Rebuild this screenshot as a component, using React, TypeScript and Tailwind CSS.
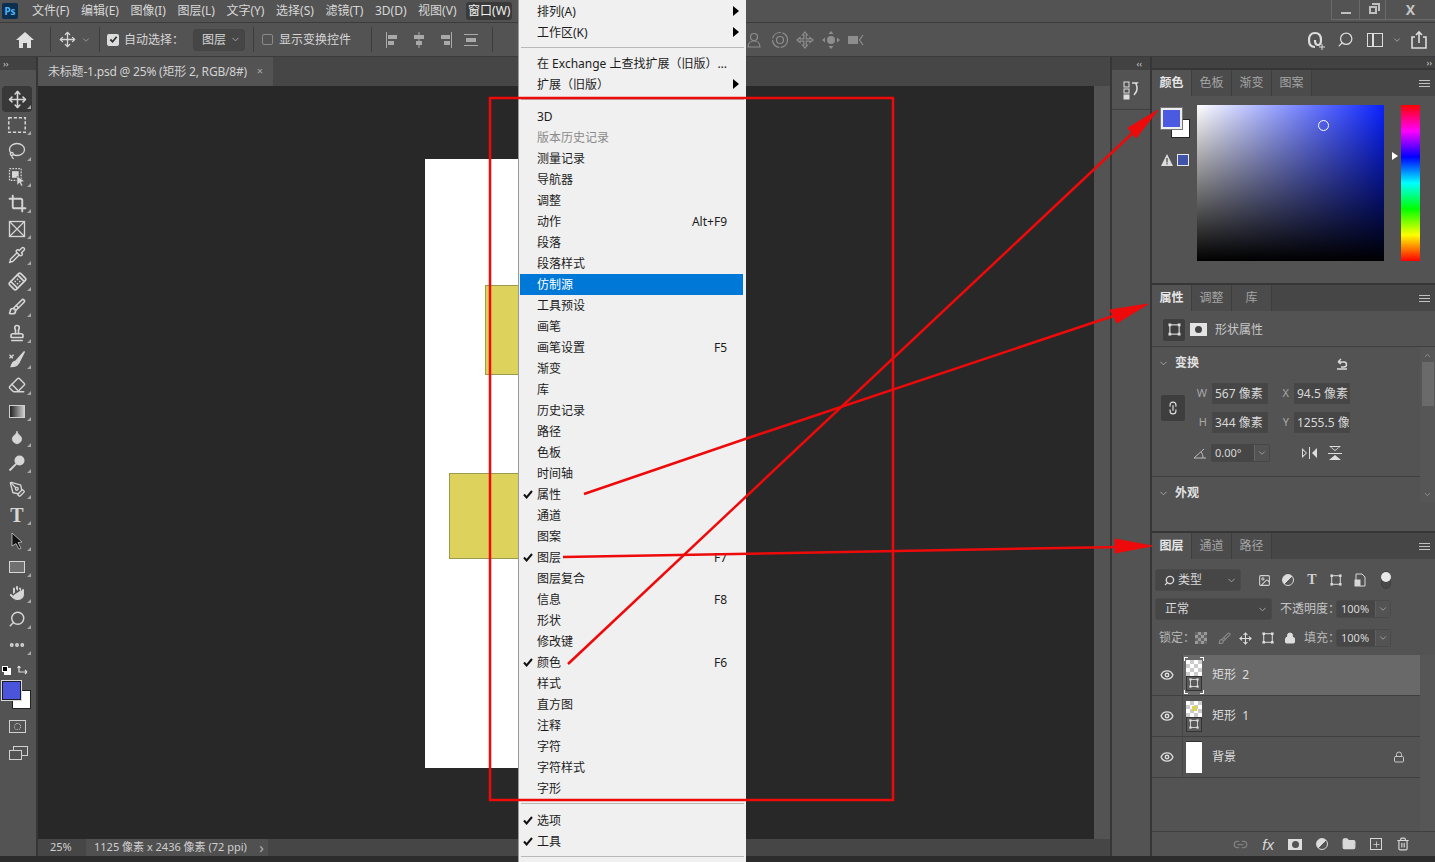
import type { ReactNode } from 'react';
import {
  Bandage,
  Brush,
  ChevronDown,
  Crop,
  Droplet,
  Ellipsis,
  Eraser,
  Eye,
  FolderClosed,
  Hand,
  Image as ImageIcon,
  Lasso,
  Link2,
  Lock,
  Move,
  PenTool,
  Pipette,
  Plus,
  Search,
  Stamp,
  Trash2,
} from 'lucide-react';

const MENUS = ['文件(F)', '编辑(E)', '图像(I)', '图层(L)', '文字(Y)', '选择(S)', '滤镜(T)', '3D(D)', '视图(V)'];

const WINDOW_ITEMS: { label: string; key?: string; checked?: boolean; disabled?: boolean; active?: boolean }[] = [
  { label: '3D' },
  { label: '版本历史记录', disabled: true },
  { label: '测量记录' },
  { label: '导航器' },
  { label: '调整' },
  { label: '动作', key: 'Alt+F9' },
  { label: '段落' },
  { label: '段落样式' },
  { label: '仿制源', active: true },
  { label: '工具预设' },
  { label: '画笔' },
  { label: '画笔设置', key: 'F5' },
  { label: '渐变' },
  { label: '库' },
  { label: '历史记录' },
  { label: '路径' },
  { label: '色板' },
  { label: '时间轴' },
  { label: '属性', checked: true },
  { label: '通道' },
  { label: '图案' },
  { label: '图层', key: 'F7', checked: true },
  { label: '图层复合' },
  { label: '信息', key: 'F8' },
  { label: '形状' },
  { label: '修改键' },
  { label: '颜色', key: 'F6', checked: true },
  { label: '样式' },
  { label: '直方图' },
  { label: '注释' },
  { label: '字符' },
  { label: '字符样式' },
  { label: '字形' },
];

const Glyph = ({ children, size = 22 }: { children: ReactNode; size?: number }) => (
  <svg width={size} height={size} viewBox="0 0 24 24" fill="none" stroke="currentColor" strokeWidth="1.7">
    {children}
  </svg>
);

// bounding box with little corner handles, used all over the panels
const FrameIcon = ({ size = 13, color = '#dddddd' }: { size?: number; color?: string }) => (
  <svg width={size} height={size} viewBox="0 0 14 14" fill="none" stroke={color} strokeWidth="1.2">
    <rect x="2" y="2" width="10" height="10" />
    <rect x="0.5" y="0.5" width="3" height="3" fill={color} stroke="none" />
    <rect x="10.5" y="0.5" width="3" height="3" fill={color} stroke="none" />
    <rect x="0.5" y="10.5" width="3" height="3" fill={color} stroke="none" />
    <rect x="10.5" y="10.5" width="3" height="3" fill={color} stroke="none" />
  </svg>
);

const ToolCell = ({ children, selected }: { children: ReactNode; selected?: boolean }) => (
  <div className={`relative flex h-[26px] w-[30px] items-center justify-center ml-[2px] rounded-sm text-[#d6d6d6] ${selected ? 'bg-[#383838]' : ''}`}>
    {children}
    <span className="absolute bottom-[3px] right-[1px] h-0 w-0 border-l-[4px] border-b-[4px] border-l-transparent border-b-[#a8a8a8]" />
  </div>
);

const LeftTools = () => (
  <div className="flex w-[36px] shrink-0 flex-col bg-[#535353]">
    <div className="flex h-[13px] items-center bg-[#424242] pl-[3px] text-[9px] leading-none text-[#d0d0d0]">››</div>
    <div className="h-[16px]" />
    <ToolCell selected><Move size={19} strokeWidth={2} /></ToolCell>
    <ToolCell><Glyph><rect x="3" y="4" width="18" height="16" strokeDasharray="3.5 2" /></Glyph></ToolCell>
    <ToolCell><Lasso size={18} strokeWidth={1.7} /></ToolCell>
    <ToolCell>
      <Glyph size={20}>
        <rect x="3" y="2" width="14" height="14" strokeDasharray="2 1.5" strokeWidth="1.5" />
        <rect x="6" y="5" width="8" height="8" fill="currentColor" stroke="none" />
        <path d="M12 11l9 6-4 1 2 4-2 1-2-4-3 3z" fill="currentColor" stroke="#535353" strokeWidth="0.6" />
      </Glyph>
    </ToolCell>
    <ToolCell><Crop size={19} strokeWidth={2.4} /></ToolCell>
    <ToolCell>
      <Glyph size={20}>
        <rect x="3" y="3" width="18" height="18" strokeWidth="1.6" />
        <path d="M3 3l18 18M21 3L3 21" strokeWidth="1.4" />
      </Glyph>
    </ToolCell>
    <ToolCell><Pipette size={18} strokeWidth={1.9} /></ToolCell>
    <ToolCell><Bandage size={19} strokeWidth={2.2} className="-rotate-45" /></ToolCell>
    <ToolCell><Brush size={18} strokeWidth={2.2} /></ToolCell>
    <ToolCell><Stamp size={18} strokeWidth={2.2} /></ToolCell>
    <ToolCell>
      <Glyph size={20}>
        <path d="M21 3L11 14l3 3z" fill="currentColor" />
        <path d="M10 15c-3 0-4 3-5 6 3 0 7-1 8-3z" fill="currentColor" />
        <path d="M3 11l5-4M3 7l4 4" strokeWidth="1.6" />
      </Glyph>
    </ToolCell>
    <ToolCell><Eraser size={18} strokeWidth={1.9} /></ToolCell>
    <ToolCell><div className="h-[13px] w-[16px] border border-[#d0d0d0] bg-[linear-gradient(to_right,#222222,#cccccc)]" /></ToolCell>
    <ToolCell><Droplet size={16} fill="currentColor" strokeWidth={1} /></ToolCell>
    <ToolCell>
      <Glyph size={20}>
        <circle cx="15" cy="9" r="6" fill="currentColor" stroke="none" />
        <path d="M11 13l-8 8" strokeWidth="2.4" />
      </Glyph>
    </ToolCell>
    <ToolCell><PenTool size={17} strokeWidth={1.9} /></ToolCell>
    <ToolCell><span className="font-['Liberation_Serif',serif] text-[20px] font-bold leading-none">T</span></ToolCell>
    <ToolCell>
      <svg width="16" height="18" viewBox="0 0 16 18"><path d="M3 1l10 9-4 .6 3 5.6-2 1-3-5.6L3 14z" fill="#111111" stroke="#dddddd" strokeWidth="0.7" /></svg>
    </ToolCell>
    <ToolCell><div className="h-[12px] w-[16px] border border-[#d6d6d6] bg-[#707070]" /></ToolCell>
    <ToolCell><Hand size={18} fill="currentColor" strokeWidth={1.4} stroke="#535353" /></ToolCell>
    <ToolCell><Search size={18} strokeWidth={1.9} className="-scale-x-100" /></ToolCell>
    <ToolCell><Ellipsis size={18} strokeWidth={3.2} /></ToolCell>
    <div className="ml-[2px] mt-[7px] flex h-[12px] w-[30px] items-center justify-between pr-[3px]">
      <div className="relative h-[10px] w-[10px]">
        <span className="absolute left-[2px] top-[2px] h-[7px] w-[7px] bg-white" />
        <span className="absolute left-0 top-0 h-[6px] w-[6px] border border-white bg-black" />
      </div>
      <svg width="12" height="12" viewBox="0 0 12 12" fill="none" stroke="#d8d8d8" strokeWidth="1.2"><path d="M2 1v6h8M10 7L8 5M10 7L8 9M2 1L.5 3M2 1l1.5 2" /></svg>
    </div>
    <div className="relative ml-[2px] mt-[3px] h-[30px] w-[30px]">
      <span className="absolute left-[10px] top-[10px] h-[19px] w-[19px] border border-[#222222] bg-white" />
      <span className="absolute left-0 top-[1px] h-[19px] w-[19px] border border-[#1d1d2a] bg-[#4b55dc] outline outline-[1px] outline-[#d8d8d8]" />
    </div>
    <div className="ml-[2px] mt-[3px] flex h-[26px] w-[30px] items-center justify-center">
      <div className="flex h-[13px] w-[17px] items-center justify-center border border-[#d0d0d0]">
        <span className="h-[7px] w-[7px] rounded-full border border-dotted border-[#d0d0d0]" />
      </div>
    </div>
    <div className="relative ml-[2px] mt-[2px] h-[26px] w-[30px]">
      <span className="absolute left-[11px] top-[5px] h-[10px] w-[15px] border border-[#d0d0d0]" />
      <span className="absolute left-[7px] top-[9px] h-[10px] w-[13px] border border-[#d0d0d0] bg-[#535353]" />
    </div>
    <div className="flex-1" />
  </div>
);

const AlignIcon = ({ d }: { d: string }) => (
  <svg width="18" height="18" viewBox="0 0 18 18" fill="#a9a9a9"><path d={d} /></svg>
);

const View3DIcons = () => (
  <div className="ml-[252px] flex items-center gap-[7.5px] text-[#8e8e8e]">
    <svg width="18" height="18" viewBox="0 0 18 18" fill="none" stroke="currentColor" strokeWidth="1.2"><circle cx="9" cy="6" r="3.5" /><path d="M3 16c0-4 3-6 6-6s6 2 6 6z" /></svg>
    <svg width="18" height="18" viewBox="0 0 18 18" fill="none" stroke="currentColor" strokeWidth="1.2"><circle cx="9" cy="9" r="7.5" strokeDasharray="11 1.5" /><circle cx="9" cy="9" r="3.5" /></svg>
    <svg width="18" height="18" viewBox="0 0 18 18" fill="none" stroke="currentColor" strokeWidth="1.2"><path d="M9 1l2.4 3H10.2v3.8H14V6.6l3 2.4-3 2.4v-1.2h-3.8V14h1.2L9 17l-2.4-3h1.2v-3.8H4v1.2L1 9l3-2.4v1.2h3.8V4H6.6z" /></svg>
    <svg width="18" height="18" viewBox="0 0 18 18" fill="currentColor"><circle cx="9" cy="9" r="4" /><path d="M9 0l2.5 3h-5zM9 18l-2.5-3h5zM0 9l3-2.5v5zM18 9l-3 2.5v-5z" /></svg>
    <svg width="18" height="18" viewBox="0 0 18 18" fill="none"><rect x="1" y="5" width="10" height="8" fill="currentColor" /><path d="M16 4l-3.5 5 3.5 5" stroke="currentColor" strokeWidth="1.2" /></svg>
  </div>
);

const OptionsBar = () => (
  <div className="flex h-[35px] shrink-0 items-center border-y border-[#3b3b3b] bg-[#535353] text-[12px] text-[#d6d6d6]">
    <div className="flex w-[50px] items-center justify-center">
      <svg width="18" height="16" viewBox="0 0 18 16" fill="#e0e0e0"><path d="M9 0L0 8h3v8h4v-5h4v5h4V8h3z" /></svg>
    </div>
    <div className="h-[25px] w-px bg-[#3c3c3c]" />
    <div className="flex w-[48px] items-center justify-center gap-[5px]">
      <Move size={17} strokeWidth={1.8} />
      <ChevronDown size={10} className="text-[#a0a0a0]" />
    </div>
    <div className="h-[25px] w-px bg-[#3c3c3c]" />
    <span className="ml-[7px] flex h-[12px] w-[12px] items-center justify-center rounded-[2px] bg-[#dcdcdc]">
      <svg width="9" height="9" viewBox="0 0 10 10" fill="none" stroke="#333333" strokeWidth="2"><path d="M1.5 5l2.5 2.5L8.5 2" /></svg>
    </span>
    <span className="ml-[5px] w-[69px]">自动选择：</span>
    <div className="flex h-[22px] w-[52px] items-center justify-between rounded-[3px] border border-[#444444] bg-[#464646] pl-[8px] pr-[3px]">
      图层<ChevronDown size={11} className="text-[#a8a8a8]" />
    </div>
    <div className="ml-[8px] h-[25px] w-px bg-[#3c3c3c]" />
    <span className="ml-[8px] h-[11px] w-[11px] rounded-[2px] border border-[#8a8a8a]" />
    <span className="ml-[6px]">显示变换控件</span>
    <div className="ml-[20px] h-[25px] w-px bg-[#3c3c3c]" />
    <div className="ml-[12px] flex items-center gap-[8px]">
      <AlignIcon d="M2 1h1v16H2zM4 4h9v4H4zM4 10h6v4H4z" />
      <AlignIcon d="M8.5 1h1v16h-1zM4 4h10v4H4zM6 10h6v4H6z" />
      <AlignIcon d="M15 1h1v16h-1zM5 4h9v4H5zM8 10h6v4H8z" />
      <AlignIcon d="M2 3h14v1H2zM2 14h14v1H2zM4 7h10v4H4z" />
    </div>
    <div className="ml-[12px] h-[25px] w-px bg-[#3c3c3c]" />
    <View3DIcons />
    <div className="ml-auto flex items-center pr-[7px] text-[#dcdcdc]">
      <svg width="20" height="20" viewBox="0 0 20 20" fill="none" stroke="#dddddd" strokeWidth="2.2"><path d="M9 17c-4 0-6-3-6-7s2-7 6-7 6 3 6 7c0 3-1 5-3 5s-3-2-3-5" /><path d="M13 17h6M16 14v6" strokeWidth="1" /></svg>
      <span className="ml-[11px]"><Search size={17} strokeWidth={1.8} className="-scale-x-100" /></span>
      <span className="ml-[13px] flex h-[14px] w-[16px] items-center border-[1.5px] border-[#dddddd]"><span className="ml-[4px] h-full w-[1.5px] bg-[#dddddd]" /></span>
      <ChevronDown size={10} className="ml-[9px] text-[#b0b0b0]" />
      <svg className="ml-[8px]" width="18" height="20" viewBox="0 0 18 20" fill="none" stroke="#dddddd" strokeWidth="1.6"><path d="M5 7H2v11h14V7h-3M9 13V2M6 5l3-3 3 3" /></svg>
    </div>
  </div>
);

const DocumentArea = () => (
  <div className="flex w-[1072px] shrink-0 flex-col">
    <div className="flex h-[29px] shrink-0 bg-[#464646]">
      <div className="flex w-[235px] items-center justify-between bg-[#535353] pl-[10px] pr-[10px] text-[12px] text-[#d2d2d2]">
        <span className="tracking-[-0.2px]">未标题-1.psd @ 25% (矩形 2, RGB/8#)</span>
        <span className="text-[11px] text-[#a8a8a8]">×</span>
      </div>
    </div>
    <div className="flex min-h-0 flex-1">
      <div className="relative flex-1 bg-[#282828]">
        <div className="absolute left-[387px] top-[73px] h-[609px] w-[281px] bg-white" />
        <div className="absolute left-[447px] top-[199px] h-[90px] w-[120px] border border-[#9c9a4c] bg-[#ddd35c]" />
        <div className="absolute left-[411px] top-[387px] h-[86px] w-[120px] border border-[#9c9a4c] bg-[#ddd35c]" />
      </div>
      <div className="w-[16px] bg-[#535353]" />
    </div>
    <div className="flex h-[17px] shrink-0 items-center bg-[#464646] text-[11px] text-[#cfcfcf]">
      <span className="w-[48px] pl-[12px]">25%</span>
      <div className="flex h-full w-[182px] items-center justify-between bg-[#505050] pl-[8px] pr-[4px]">
        <span>1125 像素 x 2436 像素 (72 ppi)</span>
        <span className="text-[15px] leading-none text-[#b0b0b0]">›</span>
      </div>
    </div>
  </div>
);

const PanelTabs = ({ tabs }: { tabs: string[] }) => (
  <div className="flex h-[26px] shrink-0 items-stretch bg-[#464646]">
    {tabs.map((t, i) => (
      <div
        key={t}
        className={`flex w-[40px] items-center justify-center border-r border-[#3e3e3e] text-[12px] ${i === 0 ? 'bg-[#535353] font-bold text-[#e6e6e6]' : 'text-[#a4a4a4] bg-[#4b4b4b]'}`}
      >
        {t}
      </div>
    ))}
    <div className="ml-auto flex w-[16px] flex-col items-start justify-center gap-[2px] pr-[3px]">
      <span className="h-px w-[11px] bg-[#c0c0c0]" />
      <span className="h-px w-[11px] bg-[#c0c0c0]" />
      <span className="h-px w-[11px] bg-[#c0c0c0]" />
    </div>
  </div>
);

const ColorPanel = () => (
  <section className="flex h-[213px] shrink-0 flex-col bg-[#535353]">
    <PanelTabs tabs={['颜色', '色板', '渐变', '图案']} />
    <div className="flex pl-[9px] pt-[9px]">
      <div className="w-[36px] pt-[3px]">
        <div className="relative h-[32px] w-[30px]">
          <span className="absolute left-[10px] top-[11px] h-[19px] w-[19px] border border-[#222222] bg-white" />
          <span className="absolute left-0 top-0 h-[21px] w-[21px] border-2 border-[#eeeeee] bg-[#4b5ae0] outline outline-[1px] outline-[#777777]" />
        </div>
        <div className="mt-[14px] flex items-center gap-[4px]">
          <svg width="12" height="12" viewBox="0 0 12 12"><path d="M6 0l6 12H0z" fill="#dcdcdc" /><path d="M5.4 4h1.2v4.4H5.4zM5.4 9.2h1.2v1.2H5.4z" fill="#444444" /></svg>
          <span className="h-[12px] w-[12px] border border-[#e8e8e8] bg-[#4054ac]" />
        </div>
      </div>
      <div className="relative h-[156px] w-[187px] bg-[linear-gradient(to_right,#ffffff,#0a22ff)]">
        <div className="h-full w-full bg-[linear-gradient(to_top,#000000,rgba(0,0,0,0))]" />
        <span className="absolute left-[121px] top-[15px] h-[11px] w-[11px] rounded-full border border-white" />
      </div>
      <div className="relative ml-[17px] h-[156px] w-[19px] bg-[linear-gradient(to_bottom,#ff0000,#ff00ff,#0000ff,#00ffff,#00ff00,#ffff00,#ff0000)]">
        <span className="absolute -left-[9px] top-[47px] h-0 w-0 border-y-[4px] border-l-[6px] border-y-transparent border-l-white" />
      </div>
    </div>
  </section>
);

const Field = ({ label, value }: { label: string; value: string }) => (
  <div className="flex items-center">
    <span className="w-[18px] pr-[5px] text-right text-[11px] text-[#a8a8a8]">{label}</span>
    <div className="flex h-[21px] w-[56px] items-center overflow-hidden whitespace-nowrap border border-[#474747] bg-[#464646] pl-[2px] text-[12px] text-[#d8d8d8]">{value}</div>
  </div>
);

const SectionHead = ({ title }: { title: string }) => (
  <div className="flex items-center text-[12px] font-bold text-[#e2e2e2]">
    <ChevronDown size={11} className="ml-[6px] mr-[6px] text-[#a8a8a8]" />
    {title}
  </div>
);

const PropertiesPanel = () => (
  <section className="flex h-[246px] shrink-0 flex-col bg-[#535353]">
    <PanelTabs tabs={['属性', '调整', '库']} />
    <div className="flex h-[36px] shrink-0 items-center border-b border-[#3f3f3f] pl-[11px] pt-[2px] text-[12px] text-[#c8c8c8]">
      <span className="flex h-[22px] w-[22px] items-center justify-center rounded-[2px] bg-[#3e3e3e]">
        <FrameIcon />
      </span>
      <span className="ml-[5px] flex h-[13px] w-[17px] items-center justify-center bg-[#e4e4e4]"><span className="h-[7px] w-[7px] rounded-full bg-[#444444]" /></span>
      <span className="ml-[8px]">形状属性</span>
    </div>
    <div className="flex min-h-0 flex-1">
      <div className="w-[268px]">
        <div className="mt-[7px]">
          <div className="flex items-center justify-between pr-[71px]">
            <SectionHead title="变换" />
            <svg width="14" height="14" viewBox="0 0 14 14" fill="none" stroke="#dddddd" strokeWidth="1.4"><path d="M3 6h6a2.5 2.5 0 010 5H6M3 6l3-3M3 6l3 2M2 13h10" /></svg>
          </div>
        </div>
        <div className="mt-[11px] flex items-center pl-[9px]">
          <span className="flex h-[26px] w-[24px] items-center justify-center rounded-[2px] bg-[#3e3e3e] text-[#dddddd]"><Link2 size={14} className="rotate-90" /></span>
          <div className="ml-[9px] flex flex-col gap-[8px]">
            <div className="flex gap-[8px]"><Field label="W" value="567 像素" /><Field label="X" value="94.5 像素" /></div>
            <div className="flex gap-[8px]"><Field label="H" value="344 像素" /><Field label="Y" value="1255.5 像素" /></div>
          </div>
        </div>
        <div className="mt-[11px] flex items-center pl-[41px]">
          <svg width="14" height="12" viewBox="0 0 14 12" fill="none" stroke="#bcbcbc" strokeWidth="1"><path d="M13 11H1L11 2M8 5c1 1 2 3 2 6" /></svg>
          <div className="ml-[4px] flex h-[18px] w-[59px] items-center justify-between rounded-[2px] border border-[#474747] bg-[#464646] pl-[3px] text-[11px] text-[#d8d8d8]">
            0.00°
            <span className="flex h-full w-[15px] items-center justify-center border-l border-[#666666] bg-[#535353]"><ChevronDown size={10} className="text-[#a8a8a8]" /></span>
          </div>
          <svg className="ml-[31px]" width="17" height="12" viewBox="0 0 17 12" fill="#dddddd"><path d="M6 6L1 1v10zM2 3.5v5L5 6zM11 6l5-5v10zM8 0h1v12H8z" fillRule="evenodd" /></svg>
          <svg className="ml-[10px]" width="14" height="16" viewBox="0 0 14 16" fill="#dddddd"><path d="M1 1h12L7 6zM3 2l4 3 4-3zM7 10l6 5H1zM0 8h14v1H0z" fillRule="evenodd" /></svg>
        </div>
        <div className="mt-[14px] h-px bg-[#3f3f3f]" />
        <div className="mt-[7px]"><SectionHead title="外观" /></div>
      </div>
      <div className="flex h-[155px] w-[15px] flex-col items-center bg-[#565656] pt-[4px]">
        <ChevronDown size={9} className="rotate-180 text-[#a0a0a0]" />
        <span className="mt-[2px] h-[44px] w-[12px] bg-[#6a6a6a]" />
        <ChevronDown size={9} className="mt-auto mb-[3px] text-[#a0a0a0]" />
      </div>
    </div>
  </section>
);

const Select = ({ children, className }: { children: ReactNode; className: string }) => (
  <div className={`flex h-[22px] shrink-0 items-center justify-between rounded-[3px] border border-[#4a4a4a] bg-[#464646] pr-[3px] text-[12px] text-[#d8d8d8] ${className}`}>
    {children}
    <ChevronDown size={11} className="text-[#a8a8a8]" />
  </div>
);

const PercentBox = () => (
  <div className="flex h-[18px] w-[55px] shrink-0 items-center justify-between rounded-[3px] border border-[#4a4a4a] bg-[#464646] pl-[4px] text-[11px] text-[#d8d8d8]">
    100%
    <span className="flex h-full w-[15px] items-center justify-center border-l border-[#5e5e5e] bg-[#535353]"><ChevronDown size={10} className="text-[#a8a8a8]" /></span>
  </div>
);

const FrameThumb = () => (
  <div className="flex h-[15px] w-[16px] items-center justify-center border border-[#333333] bg-[#5a5a5a]">
    <FrameIcon size={10} color="#e0e0e0" />
  </div>
);

const Checker = ({ children }: { children?: ReactNode }) => (
  <div className="relative flex h-[16px] w-[16px] items-center justify-center bg-[conic-gradient(#cccccc_25%,#ffffff_0_50%,#cccccc_0_75%,#ffffff_0)] bg-[length:8px_8px]">
    {children}
  </div>
);

const LayerRow = ({ thumb, name, selected, locked }: { thumb: ReactNode; name: string; selected?: boolean; locked?: boolean }) => (
  <div className={`flex h-[41px] w-[268px] items-center border-b border-[#3f3f3f] text-[12px] text-[#dedede] ${selected ? 'bg-[#696969]' : ''}`}>
    <div className="flex h-full w-[31px] shrink-0 items-center justify-center border-r border-[#474747] bg-[#535353]">
      <Eye size={14} strokeWidth={2.4} className="text-[#dddddd]" />
    </div>
    <div className="flex w-[22px] shrink-0 justify-center">{thumb}</div>
    <span className="ml-[7px] whitespace-pre">{name}</span>
    {locked && <Lock size={12} className="ml-auto mr-[15px] text-[#c8c8c8]" />}
  </div>
);

const LayersPanel = () => (
  <section className="flex min-h-0 flex-1 flex-col bg-[#535353]">
    <PanelTabs tabs={['图层', '通道', '路径']} />
    <div className="flex items-center pl-[3px] pt-[10px]">
      <Select className="w-[86px] pl-[8px]">
        <span className="flex items-center gap-[3px]"><Search size={11} strokeWidth={3} className="-scale-x-100" />类型</span>
      </Select>
      <div className="ml-[11px] flex items-center text-[#d0d0d0]">
        <span className="flex w-[24px] justify-center"><ImageIcon size={13} /></span>
        <span className="flex w-[24px] justify-center"><span className="h-[12px] w-[12px] rounded-full border border-[#d8d8d8] bg-[linear-gradient(135deg,#dddddd_50%,#555555_50%)]" /></span>
        <span className="flex w-[24px] justify-center font-['Liberation_Serif',serif] text-[14px] font-bold leading-none">T</span>
        <span className="flex w-[24px] justify-center"><FrameIcon size={12} color="#d8d8d8" /></span>
        <span className="flex w-[24px] justify-center"><svg width="12" height="14" viewBox="0 0 12 14" fill="none" stroke="#d8d8d8"><path d="M2 7V1h6l3 3v9H6" /><rect x="1" y="7" width="5" height="6" fill="#d8d8d8" /></svg></span>
        <div className="ml-[9px] flex h-[18px] w-[10px] flex-col items-center rounded-full border border-[#3f3f3f] bg-[#484848]"><span className="h-[10px] w-[10px] rounded-full bg-[#e8e8e8]" /></div>
      </div>
    </div>
    <div className="mt-[7px] flex items-center pl-[3px]">
      <Select className="w-[117px] pl-[9px]">正常</Select>
      <span className="ml-[8px] w-[56px] shrink-0 whitespace-nowrap text-[12px] text-[#c4c4c4]">不透明度：</span>
      <PercentBox />
    </div>
    <div className="mt-[8px] flex h-[20px] items-center pl-[7px] text-[12px] text-[#b8b8b8]">
      <span className="w-[36px] shrink-0 whitespace-nowrap">锁定：</span>
      <span className="h-[12px] w-[12px] shrink-0 bg-[conic-gradient(#999999_25%,#666666_0_50%,#999999_0_75%,#666666_0)] bg-[length:6px_6px]" />
      <span className="ml-[11px] text-[#8a8a8a]"><Brush size={13} /></span>
      <span className="ml-[8px]"><Move size={13} className="text-[#dddddd]" /></span>
      <span className="ml-[10px]"><FrameIcon size={12} /></span>
      <span className="ml-[10px]"><Lock size={12} fill="#dddddd" className="text-[#dddddd]" /></span>
      <span className="ml-[8px] w-[32px] shrink-0 whitespace-nowrap">填充：</span>
      <PercentBox />
    </div>
    <div className="mt-[7px] flex min-h-0 flex-1">
      <div className="flex flex-col">
        <LayerRow
          selected
          name="矩形  2"
          thumb={<div className="relative"><Checker /><FrameThumb /><span className="absolute -left-[2px] -top-[3px] h-[4px] w-[4px] border-l border-t border-white" /><span className="absolute -right-[2px] -top-[3px] h-[4px] w-[4px] border-r border-t border-white" /><span className="absolute -bottom-[3px] -left-[2px] h-[4px] w-[4px] border-b border-l border-white" /><span className="absolute -bottom-[3px] -right-[2px] h-[4px] w-[4px] border-b border-r border-white" /></div>}
        />
        <LayerRow
          name="矩形  1"
          thumb={<div><Checker><span className="h-[5px] w-[5px] bg-[#ddd35c]" /></Checker><FrameThumb /></div>}
        />
        <LayerRow name="背景" locked thumb={<div className="h-[32px] w-[16px] border-t border-[#333333] bg-white" />} />
      </div>
      <div className="w-[15px] bg-[#565656]" />
    </div>
    <div className="flex h-[25px] shrink-0 items-center justify-end gap-[14px] border-t border-[#3f3f3f] pr-[25px] text-[#d8d8d8]">
      <Link2 size={15} className="text-[#808080]" />
      <span className="font-['Liberation_Sans',sans-serif] text-[15px] italic leading-none">fx</span>
      <span className="flex h-[11px] w-[14px] items-center justify-center bg-[#dddddd]"><span className="h-[7px] w-[7px] rounded-full bg-[#535353]" /></span>
      <span className="h-[12px] w-[12px] rounded-full border border-[#d8d8d8] bg-[linear-gradient(135deg,#dddddd_50%,#555555_50%)]" />
      <FolderClosed size={14} fill="#d8d8d8" />
      <span className="flex h-[12px] w-[12px] items-center justify-center border border-[#d8d8d8]"><Plus size={9} /></span>
      <Trash2 size={14} />
    </div>
  </section>
);

const MenuSeparator = ({ className }: { className: string }) => <div className={`mx-[2px] h-px bg-[#b8b8b8] ${className}`} />;

const Arrow = () => <span className="absolute right-[4px] top-[5px] h-0 w-0 border-y-[5px] border-l-[6px] border-y-transparent border-l-black" />;

const MenuRow = ({ label, shortcut, checked, disabled, active, arrow }: { label: string; shortcut?: string; checked?: boolean; disabled?: boolean; active?: boolean; arrow?: boolean }) => (
  <div className={`relative ml-[1px] mr-[3px] flex h-[21px] items-center justify-between pl-[17px] pr-[16px] ${active ? 'bg-[#0078d7] text-white' : disabled ? 'text-[#8a8a8a]' : 'text-[#1c1c1c]'}`}>
    {checked && (
      <svg className="absolute left-[3px] top-[6px]" width="10" height="9" viewBox="0 0 10 9" fill="none" stroke="#111111" strokeWidth="2"><path d="M1 4.5l2.6 3L9 1" /></svg>
    )}
    <span className="whitespace-nowrap">{label}</span>
    {shortcut && <span>{shortcut}</span>}
    {arrow && <Arrow />}
  </div>
);

const WindowMenu = () => (
  <div className="absolute left-[518px] top-0 h-[862px] w-[228px] border-l border-[#9a9a9a] bg-[#f0f0f0] pt-px text-[12px]">
    <MenuRow label="排列(A)" arrow />
    <MenuRow label="工作区(K)" arrow />
    <MenuSeparator className="mt-[4px]" />
    <div className="h-[5px]" />
    <MenuRow label="在 Exchange 上查找扩展（旧版）…" />
    <MenuRow label="扩展（旧版）" arrow />
    <MenuSeparator className="mt-[4px]" />
    <div className="h-[6px]" />
    {WINDOW_ITEMS.map((item) => (
      <MenuRow key={item.label} label={item.label} shortcut={item.key} checked={item.checked} disabled={item.disabled} active={item.active} />
    ))}
    <MenuSeparator className="mt-[4px]" />
    <div className="h-[6px]" />
    <MenuRow label="选项" checked />
    <MenuRow label="工具" checked />
    <MenuSeparator className="mt-[4px]" />
  </div>
);

const Annotations = () => (
  <svg className="absolute inset-0" width="1435" height="862" viewBox="0 0 1435 862" fill="none" stroke="#ee0a0a">
    <rect x="490" y="98" width="403" height="702" strokeWidth="2.5" />
    <path d="M584 494L748 438L1125 312" strokeWidth="2.5" />
    <path d="M563 557L1120 547" strokeWidth="2.5" />
    <path d="M568 664L1138 128" strokeWidth="2.5" />
    <path d="M1148 304L1110 310L1117 323Z" fill="#ee0a0a" strokeWidth="1" />
    <path d="M1152 546L1115 539L1115 553Z" fill="#ee0a0a" strokeWidth="1" />
    <path d="M1158 110L1128 128L1136 138Z" fill="#ee0a0a" strokeWidth="1" />
  </svg>
);

export default function App() {
  return (
    <div className="relative flex h-[862px] w-[1435px] flex-col overflow-hidden bg-[#535353] font-['Noto_Sans','Noto_Sans_CJK_SC',sans-serif]">
      <header className="flex h-[22px] shrink-0 items-center bg-[#535353] text-[12px] text-[#d8d8d8]">
        <div className="ml-[2px] flex h-[16px] w-[16px] items-center justify-center rounded-[2px] bg-[#0c2f50] text-[10px] font-bold leading-none text-[#4fb2f5]">Ps</div>
        <nav className="ml-[14px] flex items-center gap-[11.6px]">
          {MENUS.map((m) => <span key={m} className="whitespace-nowrap">{m}</span>)}
          <span className="-ml-[2px] whitespace-nowrap rounded-[3px] bg-[#3a3a3a] px-[2px] text-[#f0f0f0]">窗口(W)</span>
        </nav>
        <div className="ml-auto mb-[2px] flex h-[20px] items-center self-start border-b border-l border-[#6a6a6a] text-[#c4c4c4]">
          <span className="flex h-full w-[28px] items-end justify-center border-r border-[#6a6a6a] pb-[5px]"><span className="h-[2px] w-[10px] bg-[#c0c0c0]" /></span>
          <span className="flex h-full w-[26px] items-center justify-center border-r border-[#6a6a6a]">
            <span className="relative h-[8px] w-[8px] border-2 border-[#c0c0c0]">
              <span className="absolute -right-[5px] -top-[5px] h-[8px] w-[8px] border-2 border-b-0 border-l-0 border-[#c0c0c0]" />
            </span>
          </span>
          <span className="flex h-full w-[49px] items-center justify-center text-[14px] font-bold leading-none">X</span>
        </div>
      </header>
      <OptionsBar />
      <div className="flex min-h-0 flex-1 gap-[2px] bg-[#363636]">
        <LeftTools />
        <DocumentArea />
        <div className="flex w-[38px] shrink-0 flex-col bg-[#535353]">
          <div className="flex h-[13px] shrink-0 items-center justify-end bg-[#424242] pr-[8px] text-[9px] leading-none text-[#d0d0d0]">‹‹</div>
          <div className="flex h-[40px] shrink-0 flex-col items-center justify-center border-b border-[#3f3f3f]">
            <svg width="16" height="20" viewBox="0 0 16 20" fill="none" stroke="#dddddd" strokeWidth="1"><rect x="1" y="2" width="5" height="5" /><rect x="1" y="9" width="5" height="4" /><rect x="1" y="15" width="5" height="4" fill="#dddddd" /><path d="M9 3h5l-1 1c2 4 1 8-2 11" strokeWidth="1.5" /></svg>
          </div>
        </div>
        <div className="flex w-[283px] shrink-0 flex-col gap-[2px]">
          <div className="flex h-[11px] shrink-0 items-center justify-end bg-[#424242] pr-[3px] text-[9px] leading-none text-[#d0d0d0]">››</div>
          <ColorPanel />
          <PropertiesPanel />
          <LayersPanel />
        </div>
      </div>
      <div className="h-[6px] shrink-0 bg-[#2c2c2c]" />
      <WindowMenu />
      <Annotations />
    </div>
  );
}
